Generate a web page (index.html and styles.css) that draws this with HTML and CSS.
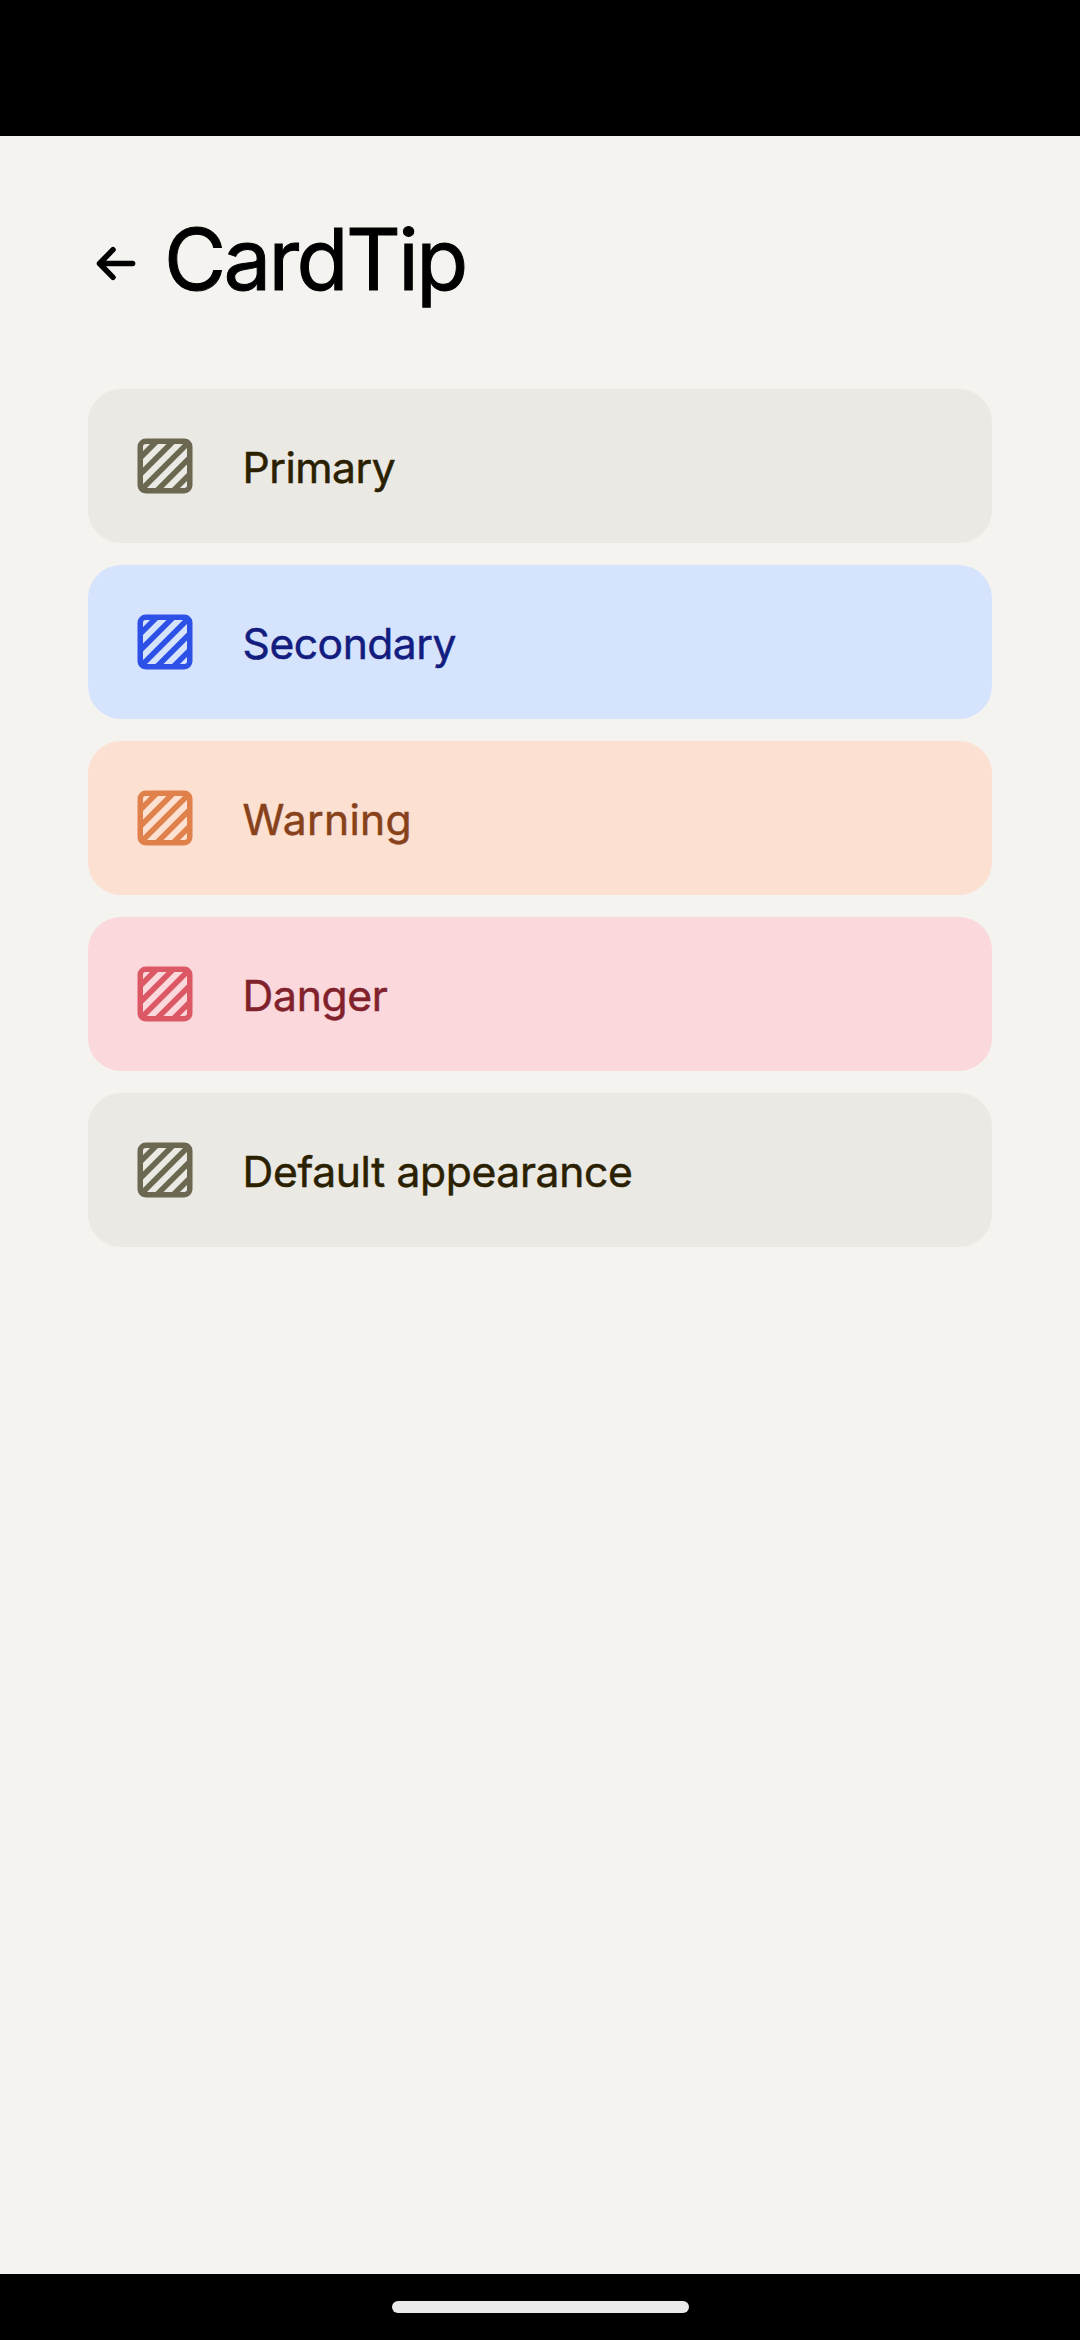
FILE: index.html
```html
<!DOCTYPE html>
<html lang="en">
<head>
<meta charset="utf-8">
<title>CardTip</title>
<link rel="stylesheet" href="styles.css">
</head>
<body>
<svg class="defs" width="0" height="0" aria-hidden="true">
  <symbol id="hatch" viewBox="0 0 24 24">
    <rect x="3" y="3" width="18" height="18" rx="2"/>
    <path d="M3 9 9 3M3 15 15 3M3 21 21 3M9 21 21 9M15 21 21 15"/>
  </symbol>
</svg>
<div class="status-bar"></div>
<main class="screen">
  <header class="header">
    <svg class="back" viewBox="0 0 55 55" aria-label="Back"><path d="M44.6 27.5H11.5M25 13.7 11.5 27.5 25 41.3"/></svg>
    <h1 class="title">CardTip</h1>
  </header>
  <section class="cards">
    <div class="card primary"><svg class="icon"><use href="#hatch"/></svg><span class="label">Primary</span></div>
    <div class="card secondary"><svg class="icon"><use href="#hatch"/></svg><span class="label">Secondary</span></div>
    <div class="card warning"><svg class="icon"><use href="#hatch"/></svg><span class="label">Warning</span></div>
    <div class="card danger"><svg class="icon"><use href="#hatch"/></svg><span class="label">Danger</span></div>
    <div class="card default"><svg class="icon"><use href="#hatch"/></svg><span class="label">Default appearance</span></div>
  </section>
</main>
<footer class="nav-bar"><div class="handle"></div></footer>
</body>
</html>
```
FILE: styles.css
```css
* { box-sizing: border-box; }

body {
  margin: 0;
  height: 2340px;
  display: flex;
  flex-direction: column;
  background: #f4f3ef;
  font-family: Inter, "Liberation Sans", sans-serif;
}

.defs { position: absolute; }

.status-bar { height: 136px; background: #000; }

.screen { flex: 1; padding: 68px 88px 0; }

.header {
  display: flex;
  align-items: center;
  height: 110px;
  margin-bottom: 75px;
}

.back {
  width: 55px;
  height: 55px;
  margin: 8px 21px 0 0;
  fill: none;
  stroke: #000;
  stroke-width: 5.5;
  stroke-linecap: round;
  stroke-linejoin: round;
}

.title {
  margin: 0;
  padding-top: 1px;
  font-size: 85px;
  font-weight: 400;
  line-height: 110px;
  letter-spacing: -2.6px;
  color: #000;
  -webkit-text-stroke: 1px;
}

.cards { display: flex; flex-direction: column; gap: 22px; }

.card {
  display: flex;
  align-items: center;
  gap: 44px;
  height: 154px;
  padding: 0 44px;
  border-radius: 33px;
}

.icon {
  width: 66px;
  height: 66px;
  fill: none;
  stroke: currentColor;
  stroke-width: 2;
}

.label {
  padding: 3px 0 0 0.6px;
  font-size: 42.6px;
  font-weight: 400;
  line-height: 66px;
  white-space: nowrap;
  -webkit-text-stroke: 0.5px;
}

.primary, .default { background: #eae9e3; color: #6b6750; }
.primary .label, .default .label { color: #2b2100; }
.primary .label { letter-spacing: -0.5px; }
.default .label { letter-spacing: -0.35px; }

.secondary { background: #d6e3fd; color: #2d50e6; }
.secondary .label { color: #131d80; letter-spacing: -0.5px; }

.warning { background: #fce0d2; color: #e0804a; }
.warning .label { color: #87421b; letter-spacing: 0.3px; }

.danger { background: #fad8dc; color: #db5864; }
.danger .label { color: #80212b; letter-spacing: -0.3px; }

.nav-bar {
  display: flex;
  justify-content: center;
  height: 66px;
  padding-top: 27px;
  background: #000;
}

.handle {
  width: 297px;
  height: 12px;
  border-radius: 6px;
  background: #eaeaea;
}
```
